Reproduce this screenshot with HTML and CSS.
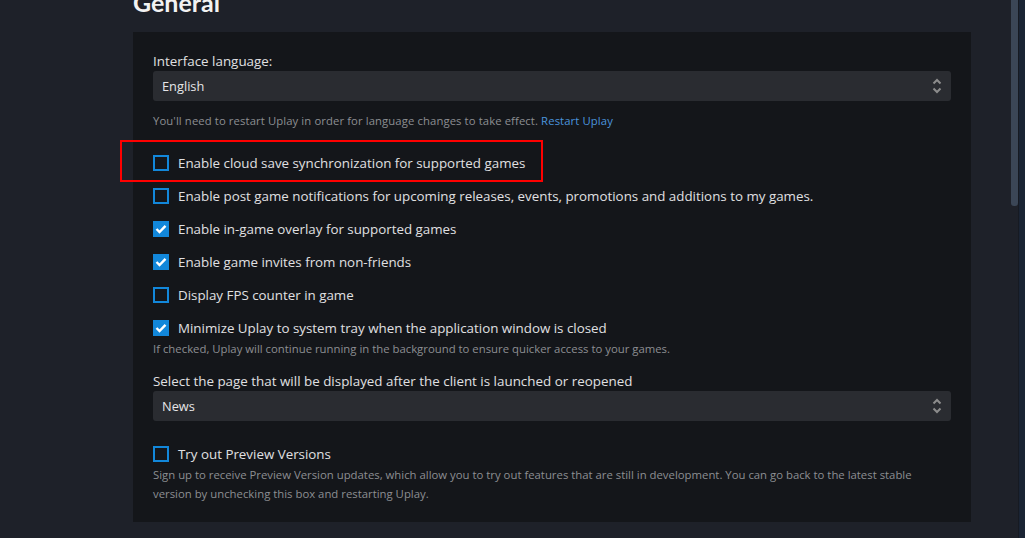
FILE: index.html
```html
<!DOCTYPE html>
<html lang="en">
<head>
<meta charset="utf-8">
<title>Settings - General</title>
<link rel="stylesheet" href="styles.css">
</head>
<body>
<div class="app">
  <main class="main">
    <h1 class="title">General</h1>
    <section class="panel">
      <div class="field-label">Interface language:</div>
      <div class="select">
        <span class="select-value">English</span>
        <svg class="select-arrows" width="10" height="18" viewBox="0 0 10 18"><path d="M1.5 6.5 L5 3 L8.5 6.5" fill="none" stroke="#8c8c8c" stroke-width="2"/><path d="M1.5 11.5 L5 15 L8.5 11.5" fill="none" stroke="#8c8c8c" stroke-width="2"/></svg>
      </div>
      <p class="note">You'll need to restart Uplay in order for language changes to take effect. <a class="link" href="#">Restart Uplay</a></p>

      <div class="options">
        <div class="option highlighted">
          <span class="box"></span><span class="opt-text">Enable cloud save synchronization for supported games</span>
          <span class="highlight"></span>
        </div>
        <div class="option">
          <span class="box"></span><span class="opt-text">Enable post game notifications for upcoming releases, events, promotions and additions to my games.</span>
        </div>
        <div class="option">
          <span class="box checked"><svg width="12" height="10" viewBox="0 0 12 10"><path d="M1.5 5 L4.5 8 L10.5 1.8" fill="none" stroke="#fff" stroke-width="2.4"/></svg></span><span class="opt-text">Enable in-game overlay for supported games</span>
        </div>
        <div class="option">
          <span class="box checked"><svg width="12" height="10" viewBox="0 0 12 10"><path d="M1.5 5 L4.5 8 L10.5 1.8" fill="none" stroke="#fff" stroke-width="2.4"/></svg></span><span class="opt-text">Enable game invites from non-friends</span>
        </div>
        <div class="option">
          <span class="box"></span><span class="opt-text">Display FPS counter in game</span>
        </div>
        <div class="option">
          <span class="box checked"><svg width="12" height="10" viewBox="0 0 12 10"><path d="M1.5 5 L4.5 8 L10.5 1.8" fill="none" stroke="#fff" stroke-width="2.4"/></svg></span><span class="opt-text">Minimize Uplay to system tray when the application window is closed</span>
        </div>
      </div>
      <p class="sub">If checked, Uplay will continue running in the background to ensure quicker access to your games.</p>

      <div class="field-label second">Select the page that will be displayed after the client is launched or reopened</div>
      <div class="select">
        <span class="select-value">News</span>
        <svg class="select-arrows" width="10" height="18" viewBox="0 0 10 18"><path d="M1.5 6.5 L5 3 L8.5 6.5" fill="none" stroke="#8c8c8c" stroke-width="2"/><path d="M1.5 11.5 L5 15 L8.5 11.5" fill="none" stroke="#8c8c8c" stroke-width="2"/></svg>
      </div>

      <div class="option preview">
        <span class="box"></span><span class="opt-text">Try out Preview Versions</span>
      </div>
      <p class="desc">Sign up to receive Preview Version updates, which allow you to try out features that are still in development. You can go back to the latest stable version by unchecking this box and restarting Uplay.</p>
    </section>
  </main>
  <div class="scrollbar"><div class="thumb"></div></div>
  <div class="edge"></div>
</div>
</body>
</html>
```
FILE: styles.css
```css
* { box-sizing: border-box; }
html, body { margin: 0; padding: 0; height: 100%; overflow: hidden; }
body {
  background: #1e2129;
  font-family: "Open Sans", "Lato", sans-serif;
  color: #dedfe1;
}
.app { display: flex; height: 538px; }
.main { flex: 1; padding-left: 133px; max-width: 1011px; }
.title {
  margin: -13px 0 0 0;
  font-family: "Lato", "Open Sans", sans-serif;
  font-size: 25px;
  line-height: 30px;
  font-weight: 700;
  color: #f2f2f2;
  height: 45px;
}
.panel {
  width: 838px;
  background: #14161a;
  padding: 20px 20px 19px 20px;
}
.field-label { font-size: 13.4px; line-height: 18px; margin-bottom: 1px; color: #e0e0e2; }
.field-label.second { margin-top: 15px; }
.select {
  height: 30px;
  background: #2a2c31;
  border-radius: 3px;
  display: flex;
  align-items: center;
  justify-content: space-between;
  padding: 0 9px 0 9px;
}
.select-value { font-size: 12.8px; color: #e6e6e8; }
.note {
  margin: 12px 0 0 0;
  font-size: 11.3px;
  line-height: 16px;
  color: #8c8e92;
  letter-spacing: 0.1px;
}
.link { color: #4a94dc; text-decoration: none; }
.options { margin-top: 24px; display: flex; flex-direction: column; gap: 13px; }
.option { position: relative; display: flex; align-items: center; height: 20px; }
.box {
  width: 16px; height: 16px;
  border: 2px solid #1287da;
  flex: none;
  margin-right: 9px;
  display: flex; align-items: center; justify-content: center;
}
.box.checked { background: #1287da; }
.opt-text { font-size: 13.35px; color: #e0e0e2; white-space: nowrap; }
.highlight {
  position: absolute;
  left: -33px; top: -13px;
  width: 423px; height: 42px;
  border: 2px solid #ff0000;
  pointer-events: none;
}
.sub {
  margin: 3px 0 0 0;
  font-size: 11.35px;
  line-height: 16px;
  color: #8c8e92;
}
.option.preview { margin-top: 23px; }
.desc {
  margin: 1px 0 0 0;
  font-size: 11.35px;
  line-height: 19px;
  color: #8c8e92;
}
.scrollbar {
  width: 8px;
  background: #1e2129;
  border-right: 1px solid #161a22;
}
.thumb {
  width: 7px;
  height: 206px;
  background: #3b4656;
  border-radius: 0 0 3px 3px;
}
.edge { width: 6px; background: #1a2434; }
```
